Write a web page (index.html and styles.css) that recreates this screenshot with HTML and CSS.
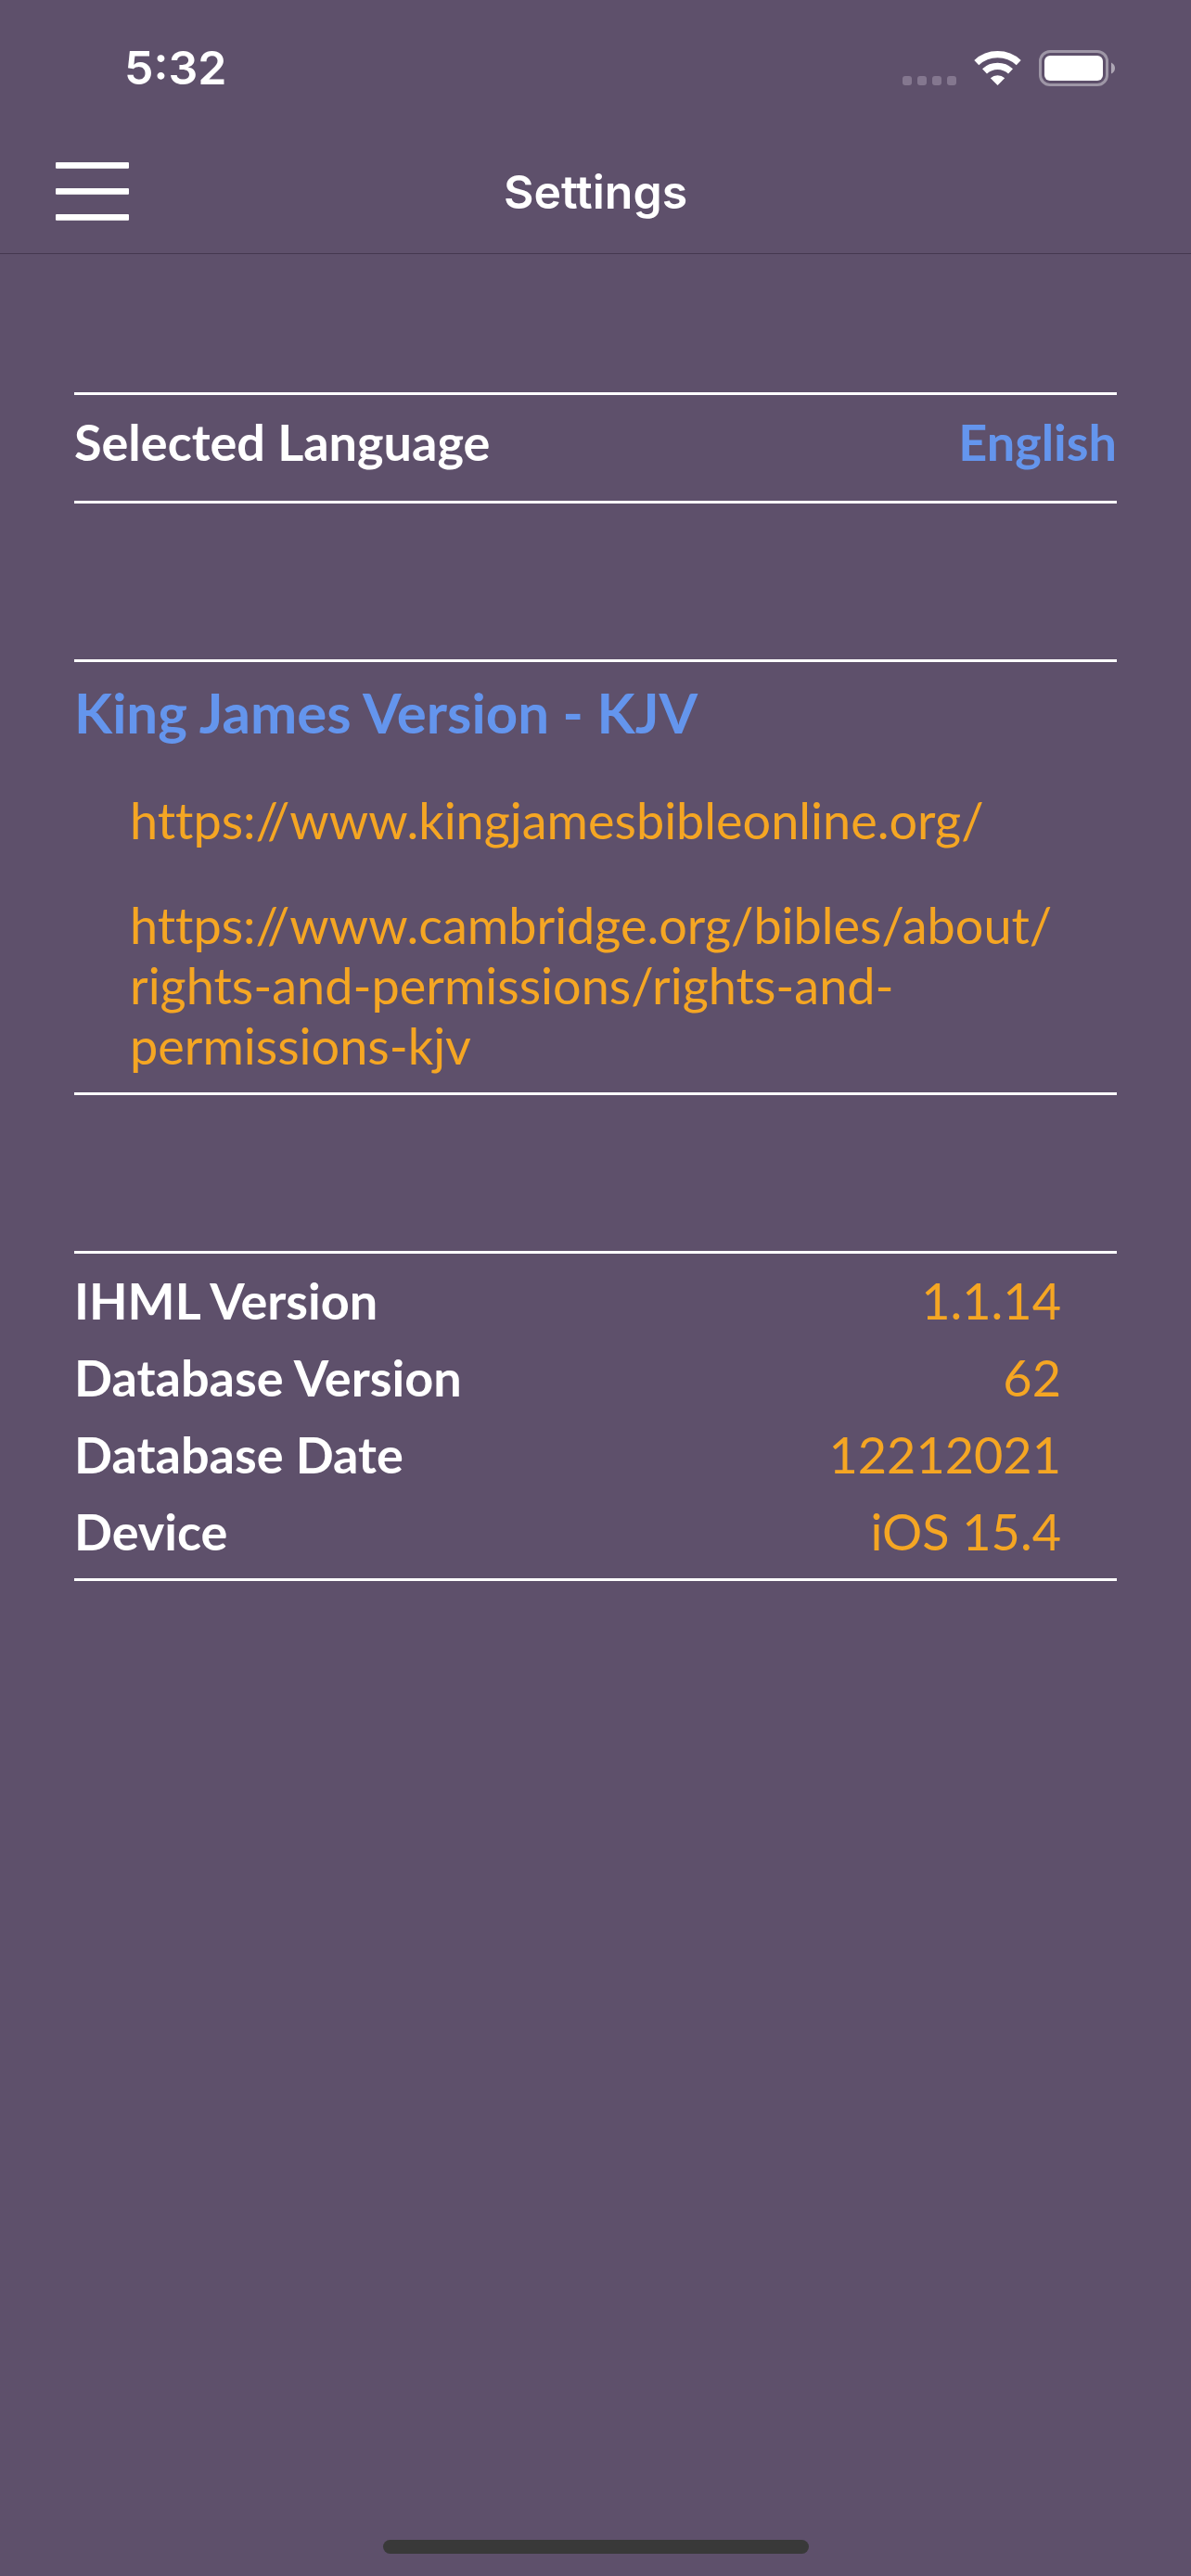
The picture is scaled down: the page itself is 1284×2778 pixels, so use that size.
FILE: index.html
```html
<!DOCTYPE html>
<html lang="en">
<head>
<meta charset="utf-8">
<meta name="viewport" content="width=device-width, initial-scale=1">
<title>Settings</title>
<link rel="stylesheet" href="styles.css">
</head>
<body class="app">
  <div class="status">
    <time class="status-time">5:32</time>
    <div class="status-icons">
      <svg width="58" height="39" viewBox="0 0 58 39" fill="#84778f" aria-hidden="true">
        <rect x="0" y="28" width="10" height="10" rx="3"/>
        <rect x="16" y="28" width="10" height="10" rx="3"/>
        <rect x="32" y="28" width="10" height="10" rx="3"/>
        <rect x="48" y="28" width="10" height="10" rx="3"/>
      </svg>
      <svg width="51" height="39" viewBox="0 0 51 39" fill="none" stroke="#fff" stroke-width="7.3" aria-hidden="true">
        <path d="M2.8 13.6A33.3 33.3 0 0 1 48.2 13.6"/>
        <path d="M11.5 22.9A20.6 20.6 0 0 1 39.5 22.9"/>
        <path d="M25.5 38L17.8 30.2A11.3 11.3 0 0 1 33.2 30.2Z" fill="#fff" stroke="none"/>
      </svg>
      <svg width="82" height="39" viewBox="0 0 82 39" aria-hidden="true">
        <rect x="1.5" y="1.5" width="72" height="36" rx="10.5" fill="none" stroke="#9e96a6" stroke-width="3"/>
        <rect x="6" y="6" width="63" height="27" rx="6" fill="#fff"/>
        <path d="M78 13.5Q82 15.5 82 19.5T78 25.5Z" fill="#aea7b5"/>
      </svg>
    </div>
  </div>

  <header class="nav">
    <button class="menu" type="button" aria-label="Menu">
      <svg width="79" height="64" viewBox="0 0 79 64" fill="#fff" aria-hidden="true">
        <rect width="79" height="6.7" rx="1"/>
        <rect y="28" width="79" height="6.7" rx="1"/>
        <rect y="56" width="79" height="6.7" rx="1"/>
      </svg>
    </button>
    <h1 class="title">Settings</h1>
  </header>

  <main class="content">
    <section class="group language">
      <span class="label" id="language">Selected Language</span>
      <button class="choice" type="button" aria-describedby="language">English</button>
    </section>

    <section class="group version">
      <h2 class="version-name">King James Version - KJV</h2>
      <a class="link" href="https://www.kingjamesbibleonline.org/">https://www.kingjamesbibleonline.org/</a>
      <a class="link" href="https://www.cambridge.org/bibles/about/rights-and-permissions/rights-and-permissions-kjv">https://www.cambridge.org/bibles/about/<wbr>rights-and-permissions/rights-and-<wbr>permissions-kjv</a>
    </section>

    <dl class="group details">
      <div class="row"><dt class="label">IHML Version</dt><dd class="value">1.1.14</dd></div>
      <div class="row"><dt class="label">Database Version</dt><dd class="value">62</dd></div>
      <div class="row"><dt class="label">Database Date</dt><dd class="value">12212021</dd></div>
      <div class="row"><dt class="label">Device</dt><dd class="value">iOS 15.4</dd></div>
    </dl>
  </main>

  <footer class="home"><div class="home-bar"></div></footer>
</body>
</html>
```
FILE: styles.css
```css
* {
  box-sizing: border-box;
}

.app {
  margin: 0;
  min-height: 100vh;
  display: flex;
  flex-direction: column;
  background: #5e506b;
  color: #fff;
  font: 54px/65px Lato, "Liberation Sans", sans-serif;
  font-variant-ligatures: none;
}

.status {
  display: flex;
  justify-content: space-between;
  align-items: center;
  padding: 43px 82px 38px 134px;
  font: 600 50px/60px Inter, "Liberation Sans", sans-serif;
}

.status-icons {
  display: flex;
  gap: 19px;
}

.status svg,
.menu svg {
  display: block;
}

.nav {
  display: grid;
  grid-template-columns: 1fr auto 1fr;
  align-items: center;
  height: 133px;
  padding: 0 60px;
  border-bottom: 1px solid #44384f;
}

.menu {
  justify-self: start;
  padding: 0;
  border: 0;
  background: none;
}

.title {
  margin: 0;
  font: 600 50px/62px Inter, "Liberation Sans", sans-serif;
}

.content {
  flex: 1;
  display: flex;
  flex-direction: column;
  gap: 168px;
  padding: 149px 80px;
}

.group {
  margin: 0;
  padding: 18px 0;
  border: solid #fff;
  border-width: 3px 0;
}

.language {
  display: flex;
  justify-content: space-between;
  padding-bottom: 31px;
}

.label {
  font-weight: 700;
}

.choice {
  padding: 0;
  border: 0;
  background: none;
  color: #6495ed;
  font: inherit;
  font-weight: 700;
  font-variant-ligatures: inherit;
}

.version {
  display: flex;
  flex-direction: column;
  gap: 48px;
}

.version-name {
  margin: 0;
  color: #6495ed;
  font-size: 60px;
  line-height: 72px;
}

.link {
  padding: 0 60px;
  color: #f5a623;
  text-decoration: none;
}

.details {
  display: flex;
  flex-direction: column;
  gap: 18px;
}

.row {
  display: flex;
  justify-content: space-between;
  padding-right: 60px;
}

.value {
  margin: 0;
  color: #f5a623;
}

.home {
  display: flex;
  justify-content: center;
  padding-bottom: 24px;
}

.home-bar {
  width: 459px;
  height: 15px;
  border-radius: 8px;
  background: #393939;
}
```
